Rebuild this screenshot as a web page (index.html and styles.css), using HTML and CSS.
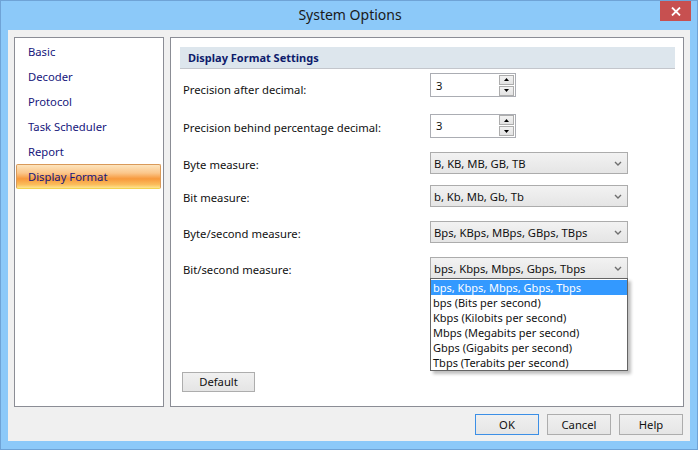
FILE: index.html
```html
<!DOCTYPE html>
<html lang="en">
<head>
<meta charset="UTF-8">
<title>System Options</title>
<link rel="stylesheet" href="styles.css">
</head>
<body>
<div class="window">
  <div class="titlebar">
    <div></div>
    <div class="title">System Options</div>
    <div class="close">
      <svg width="10" height="9" viewBox="0 0 10 9"><path d="M1 0.5 L9 8.5 M9 0.5 L1 8.5" stroke="#fff" stroke-width="1.8"/></svg>
    </div>
  </div>
  <div class="client">
    <div class="panels">
      <ul class="nav">
        <li>Basic</li>
        <li>Decoder</li>
        <li>Protocol</li>
        <li>Task Scheduler</li>
        <li>Report</li>
        <li class="active">Display Format</li>
      </ul>
      <div class="settings">
        <div class="section_head">Display Format Settings</div>
        <div class="form">
          <div class="label label_first">Precision after decimal:</div>
          <div class="spin">
            <span class="spin_value">3</span>
            <div class="spin_btns">
              <div class="spin_btn"><svg width="5" height="3" viewBox="0 0 5 3"><path d="M2.5 0 L5 3 L0 3 Z" fill="#000"/></svg></div>
              <div class="spin_btn"><svg width="5" height="3" viewBox="0 0 5 3"><path d="M0 0 L5 0 L2.5 3 Z" fill="#000"/></svg></div>
            </div>
          </div>

          <div class="label">Precision behind percentage decimal:</div>
          <div class="spin">
            <span class="spin_value">3</span>
            <div class="spin_btns">
              <div class="spin_btn"><svg width="5" height="3" viewBox="0 0 5 3"><path d="M2.5 0 L5 3 L0 3 Z" fill="#000"/></svg></div>
              <div class="spin_btn"><svg width="5" height="3" viewBox="0 0 5 3"><path d="M0 0 L5 0 L2.5 3 Z" fill="#000"/></svg></div>
            </div>
          </div>

          <div class="label">Byte measure:</div>
          <div class="select">
            <span>B, KB, MB, GB, TB</span>
            <svg class="chevron" width="8" height="5" viewBox="0 0 8 5"><path d="M1 1 L4 4 L7 1" stroke="#6f6f6f" stroke-width="1.4" fill="none"/></svg>
          </div>

          <div class="label">Bit measure:</div>
          <div class="select">
            <span>b, Kb, Mb, Gb, Tb</span>
            <svg class="chevron" width="8" height="5" viewBox="0 0 8 5"><path d="M1 1 L4 4 L7 1" stroke="#6f6f6f" stroke-width="1.4" fill="none"/></svg>
          </div>

          <div class="label">Byte/second measure:</div>
          <div class="select">
            <span>Bps, KBps, MBps, GBps, TBps</span>
            <svg class="chevron" width="8" height="5" viewBox="0 0 8 5"><path d="M1 1 L4 4 L7 1" stroke="#6f6f6f" stroke-width="1.4" fill="none"/></svg>
          </div>

          <div class="label">Bit/second measure:</div>
          <div class="select open">
            <span>bps, Kbps, Mbps, Gbps, Tbps</span>
            <svg class="chevron" width="8" height="5" viewBox="0 0 8 5"><path d="M1 1 L4 4 L7 1" stroke="#6f6f6f" stroke-width="1.4" fill="none"/></svg>
            <ul class="dropdown_list">
              <li class="selected">bps, Kbps, Mbps, Gbps, Tbps</li>
              <li>bps (Bits per second)</li>
              <li>Kbps (Kilobits per second)</li>
              <li>Mbps (Megabits per second)</li>
              <li>Gbps (Gigabits per second)</li>
              <li>Tbps (Terabits per second)</li>
            </ul>
          </div>
        </div>
        <div class="form_foot">
          <div class="btn btn_default">Default</div>
        </div>
      </div>
    </div>
    <div class="actions">
      <div class="btn btn_focus">OK</div>
      <div class="btn">Cancel</div>
      <div class="btn">Help</div>
    </div>
  </div>
</div>
</body>
</html>
```

FILE: styles.css
```css
body, html {
  margin: 0;
}
body {
  font-family: "Noto Sans", "Open Sans", sans-serif;
  font-size: 11.25px;
  color: #111;
}
ul {
  list-style: none;
  margin: 0;
  padding: 0;
}
.window {
  width: 698px;
  height: 450px;
  box-sizing: border-box;
  border: 1px solid #6fa3d6;
  background: #8cc9f9;
  display: flex;
  flex-direction: column;
}
.titlebar {
  height: 29px;
  display: grid;
  grid-template-columns: 1fr auto 1fr;
}
.title {
  font-size: 14px;
  color: #1a1a1a;
  line-height: 28px;
  padding-left: 2px;
}
.close {
  justify-self: end;
  width: 31px;
  height: 20px;
  margin-right: 6px;
  background: #c75050;
  display: flex;
  align-items: center;
  justify-content: center;
}
.client {
  margin: 0 7px 8px 7px;
  flex: 1;
  background: #f0f0f0;
  padding: 7px 6px 0 6px;
  display: flex;
  flex-direction: column;
}
.panels {
  height: 370px;
  display: flex;
  gap: 6px;
}
.nav {
  width: 150px;
  box-sizing: border-box;
  border: 1px solid #8b8d95;
  background: #fff;
  padding-top: 1px;
}
.nav li {
  height: 24px;
  padding-top: 1px;
  line-height: 24px;
  padding-left: 13px;
  color: #16167c;
}
.nav li.active {
  height: 22px;
  margin: 0 2px 0 1px;
  padding-left: 11px;
  border: 1px solid #d99a5a;
  border-bottom-color: #f3d250;
  border-radius: 2px;
  line-height: 22px;
  background: linear-gradient(#fde4bd 0%, #fbc68a 35%, #f7993c 60%, #fbbd5c 85%, #fde58c 100%);
}
.settings {
  width: 514px;
  box-sizing: border-box;
  border: 1px solid #8b8d95;
  background: #fff;
  padding: 9px 8px 0 9px;
  display: flex;
  flex-direction: column;
}
.section_head {
  height: 21px;
  line-height: 21px;
  border-bottom: 1px solid #c3c6cc;
  background: #dde6ed;
  padding-left: 8px;
  font-size: 11px;
  font-weight: bold;
  color: #0d1b6b;
}
.form {
  display: grid;
  grid-template-columns: 247px 198px;
  grid-template-rows: 32px 49px 26px 40px 32px 40px;
  padding-left: 3px;
  align-items: center;
}
.label {
  padding-top: 3px;
}
.label_first {
  padding-top: 8px;
}
.spin {
  width: 86px;
  height: 24px;
  box-sizing: border-box;
  border: 1px solid #abadb3;
  background: #fff;
  display: flex;
  align-items: center;
  justify-content: space-between;
  padding: 0 1px 0 5px;
}
.spin_btns {
  display: flex;
  flex-direction: column;
  gap: 1px;
}
.spin_btn {
  width: 15px;
  height: 10px;
  box-sizing: border-box;
  border: 1px solid #adadad;
  background: linear-gradient(#f2f2f2, #e3e3e3);
  display: flex;
  align-items: center;
  justify-content: center;
}
.select {
  position: relative;
  height: 22px;
  box-sizing: border-box;
  border: 1px solid #acacac;
  background: linear-gradient(#f2f2f2, #e5e5e5);
  display: flex;
  align-items: center;
  justify-content: space-between;
  padding: 0 5px 0 3px;
}
.dropdown_list {
  position: absolute;
  top: 100%;
  left: -1px;
  right: -1px;
  border: 1px solid #646464;
  background: #fff;
  padding: 1px 0 0 0;
  box-shadow: 3px 3px 3px rgba(0, 0, 0, 0.25);
  z-index: 5;
}
.dropdown_list li {
  height: 15px;
  line-height: 15px;
  font-size: 11px;
  padding-left: 2px;
}
.dropdown_list li.selected {
  background: #3399ff;
  color: #fff;
}
.form_foot {
  margin-top: auto;
  padding: 0 0 14px 2px;
}
.btn {
  height: 21px;
  box-sizing: border-box;
  border: 1px solid #adadad;
  background: linear-gradient(#f0f0f0, #e5e5e5);
  text-align: center;
  line-height: 19px;
  width: 64px;
}
.btn_default {
  width: 73px;
  height: 20px;
  line-height: 18px;
}
.btn_focus {
  border-color: #3c8fe6;
}
.actions {
  margin-top: 7px;
  margin-right: 1px;
  display: flex;
  justify-content: flex-end;
  gap: 8px;
}
```
